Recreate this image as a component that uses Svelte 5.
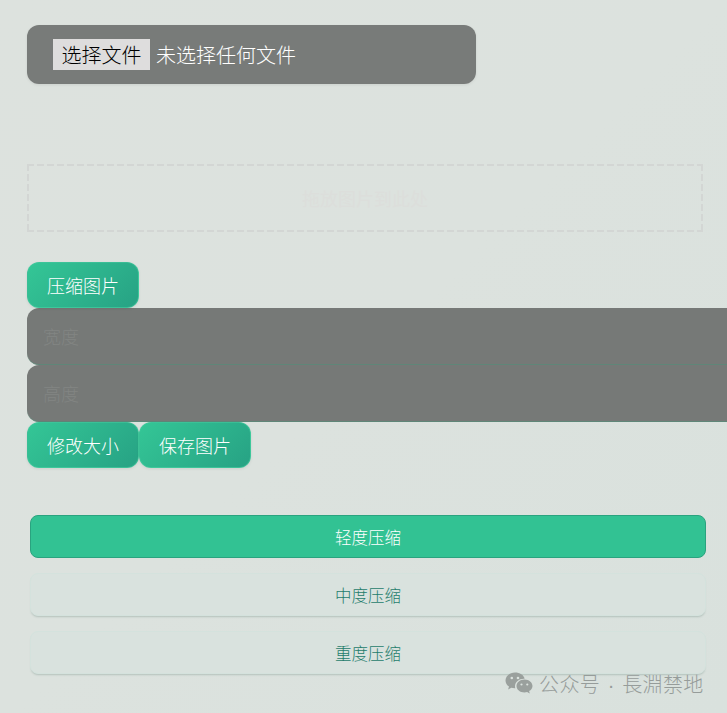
<script>
  const levels = [
    { label: '轻度压缩', active: true },
    { label: '中度压缩', active: false },
    { label: '重度压缩', active: false }
  ];
</script>

<div class="page">
  <div class="file-box">
    <input class="file" type="file" />
    <div class="file-row"><span class="file-btn">选择文件</span><span class="file-text">未选择任何文件</span></div>
  </div>

  <div class="drop"><span>拖放图片到此处</span></div>

  <div class="row"><button class="action">压缩图片</button></div>
  <input class="field" placeholder="宽度" />
  <input class="field" placeholder="高度" />
  <div class="row">
    <button class="action">修改大小</button>
    <button class="action">保存图片</button>
  </div>

  <div class="levels">
    {#each levels as level}
      <button class="level" class:active={level.active}>{level.label}</button>
    {/each}
  </div>

  <div class="mark">
    <svg width="28" height="23" viewBox="0 0 28 23" aria-hidden="true">
      <path fill="#9aa09d" d="M10 0.5C4.7 0.5 0.5 4 0.5 8.4c0 2.5 1.4 4.7 3.5 6.2l-.9 2.8 3.2-1.7c1.1.3 2.2.5 3.4.5h.6c-.2-.7-.3-1.3-.3-2 0-4.2 4-7.500 8.900-7.500h.7C18.800 3 14.800.5 10 .5z"/>
      <path fill="#9aa09d" d="M27.500 13.900c0-3.600-3.600-6.500-8-6.500s-8 2.900-8 6.500 3.600 6.500 8 6.500c.9 0 1.800-.1 2.600-.4l2.700 1.500-.7-2.400c2-1.200 3.400-3 3.400-5.200z"/>
      <circle cx="6.800" cy="6" r="1.300" fill="#dbe2de"/>
      <circle cx="13" cy="6" r="1.300" fill="#dbe2de"/>
      <circle cx="16.500" cy="12.500" r="1.100" fill="#dbe2de"/>
      <circle cx="22.300" cy="12.500" r="1.100" fill="#dbe2de"/>
    </svg>
    <span>公众号 · 長淵禁地</span>
  </div>
</div>

<style>
  :global(body) {
    margin: 0;
    background: linear-gradient(135deg, #dde2de 0%, #dce2de 50%, #d9e1dd 100%);
    overflow: hidden;
  }
  .page {
    position: relative;
    width: 727px;
    height: 713px;
    box-sizing: border-box;
    padding: 25px 0 0 27px;
    overflow: hidden;
    font-family: "Noto Sans CJK SC", "Liberation Sans", sans-serif;
    font-weight: 300;
  }
  .file { display: none; }
  .file-box {
    width: 449px;
    height: 59px;
    box-sizing: border-box;
    padding: 14px 26px;
    background: #787b79;
    border-radius: 12px;
    box-shadow: 0 1px 3px rgba(0, 0, 0, 0.08);
  }
  .file-row { display: flex; align-items: center; gap: 6px; height: 31px; }
  .file-btn {
    display: flex;
    align-items: center;
    justify-content: center;
    width: 97px;
    height: 31px;
    background: #dedddd;
    color: #000;
    font-size: 20px;
  }
  .file-text { color: #fff; font-size: 20px; }
  .drop {
    width: 676px;
    height: 68px;
    box-sizing: border-box;
    margin-top: 80px;
    background:
      repeating-linear-gradient(90deg, #d3d6d4 0 7px, transparent 7px 10px) left top / 100% 2px no-repeat,
      repeating-linear-gradient(90deg, #d3d6d4 0 7px, transparent 7px 10px) left bottom / 100% 2px no-repeat,
      repeating-linear-gradient(180deg, #d3d6d4 0 7px, transparent 7px 10px) left top / 2px 100% no-repeat,
      repeating-linear-gradient(180deg, #d3d6d4 0 7px, transparent 7px 10px) right top / 2px 100% no-repeat;
    display: flex;
    align-items: center;
    justify-content: center;
    font-size: 18px;
    font-weight: 400;
    color: #dcdedb;
  }
  .row { display: flex; }
  .drop + .row { margin-top: 30px; }
  .action {
    width: 112px;
    height: 46px;
    padding: 0;
    border: 1px solid rgba(70, 205, 160, 0.6);
    border-radius: 12px;
    background: linear-gradient(135deg, #34c696 0%, #27a284 100%);
    color: #fff;
    font: 300 18px "Noto Sans CJK SC", sans-serif;
    box-shadow: 0 1px 3px rgba(0, 0, 0, 0.08);
  }
  .field {
    display: block;
    width: 720px;
    height: 57px;
    box-sizing: border-box;
    padding: 0 16px;
    border: 0;
    border-bottom: 1px solid #5f8678;
    border-radius: 12px;
    background: #767977;
    font: 300 18px "Noto Sans CJK SC", sans-serif;
    outline: none;
  }
  .field::placeholder { color: #828583; opacity: 1; }
  .levels {
    display: flex;
    flex-direction: column;
    gap: 15px;
    width: 676px;
    margin: 47px 0 0 3px;
  }
  .level {
    height: 43px;
    padding: 0;
    border: 1px solid #d4e2dd;
    border-radius: 8px;
    background: #d9e2de;
    color: #1f7d6c;
    font: 300 16.500px "Noto Sans CJK SC", sans-serif;
    box-shadow: 0 2px 2px -1px rgba(80, 110, 100, 0.28);
  }
  .level.active {
    background: #32c293;
    border-color: #2aa37f;
    color: #fff;
    box-shadow: none;
  }
  .mark {
    position: absolute;
    left: 505px;
    top: 669px;
    display: flex;
    align-items: center;
    gap: 6px;
    color: #969c9a;
    font-family: "Liberation Sans", "Noto Sans CJK SC", sans-serif;
    font-size: 20px;
    letter-spacing: 0.400px;
    word-spacing: 1.500px;
    white-space: nowrap;
  }
</style>
